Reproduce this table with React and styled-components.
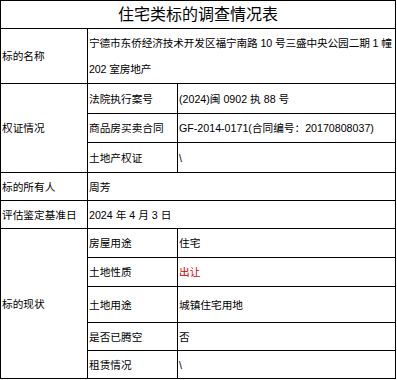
import { Fragment } from "react";
import styled, { createGlobalStyle } from "styled-components";

const GlobalStyle = createGlobalStyle`
  html, body {
    margin: 0;
    padding: 0;
    background: #ffffff;
  }
  body {
    font-family: "Liberation Sans", "Noto Sans CJK SC", sans-serif;
    color: #000000;
  }
`;

const Sheet = styled.div`
  display: grid;
  width: 396px;
  box-sizing: border-box;
  grid-template-columns: 87px 90px 218px;
  grid-template-rows: 28px 55px 30px 29px 30px 28px 28px 29px 29px 36px 28px 28px;
  border-top: 1px solid #000;
  border-left: 1px solid #000;
`;

const Cell = styled.div`
  box-sizing: border-box;
  display: flex;
  align-items: center;
  justify-content: ${(p) => (p.$title ? "center" : "flex-start")};
  grid-column: span ${(p) => p.$span || 1};
  grid-row: span ${(p) => p.$rows || 1};
  border-right: 1px solid #000;
  border-bottom: 1px solid #000;
  padding: 0 1px;
  font-size: ${(p) => (p.$title ? "16px" : "10.67px")};
  line-height: ${(p) => (p.$title ? "20px" : "26px")};
  letter-spacing: ${(p) => (p.$tight ? "-0.12px" : "normal")};
  color: ${(p) => (p.$red ? "#d40000" : "#000000")};
  white-space: nowrap;
  overflow: hidden;
`;

const rows = [
  ["房屋用途", "住宅"],
  ["土地性质", "出让", true],
  ["土地用途", "城镇住宅用地"],
  ["是否已腾空", "否"],
  ["租赁情况", "\\"],
];

export default function App() {
  return (
    <>
      <GlobalStyle />
      <Sheet>
        <Cell $title $span={3}>住宅类标的调查情况表</Cell>

        <Cell>标的名称</Cell>
        <Cell $span={2} $tight>
          <span>
            宁德市东侨经济技术开发区福宁南路 10 号三盛中央公园二期 1 幢
            <br />
            202 室房地产
          </span>
        </Cell>

        <Cell $rows={3}>权证情况</Cell>
        <Cell>法院执行案号</Cell>
        <Cell>(2024)闽 0902 执 88 号</Cell>
        <Cell>商品房买卖合同</Cell>
        <Cell>GF-2014-0171(合同编号：20170808037)</Cell>
        <Cell>土地产权证</Cell>
        <Cell>\</Cell>

        <Cell>标的所有人</Cell>
        <Cell $span={2}>周芳</Cell>

        <Cell>评估鉴定基准日</Cell>
        <Cell $span={2}>2024 年 4 月 3 日</Cell>

        <Cell $rows={5}>标的现状</Cell>
        {rows.map(([label, value, red], idx) => (
          <Fragment key={idx}>
            <Cell>{label}</Cell>
            <Cell $red={red}>{value}</Cell>
          </Fragment>
        ))}
      </Sheet>
    </>
  );
}
